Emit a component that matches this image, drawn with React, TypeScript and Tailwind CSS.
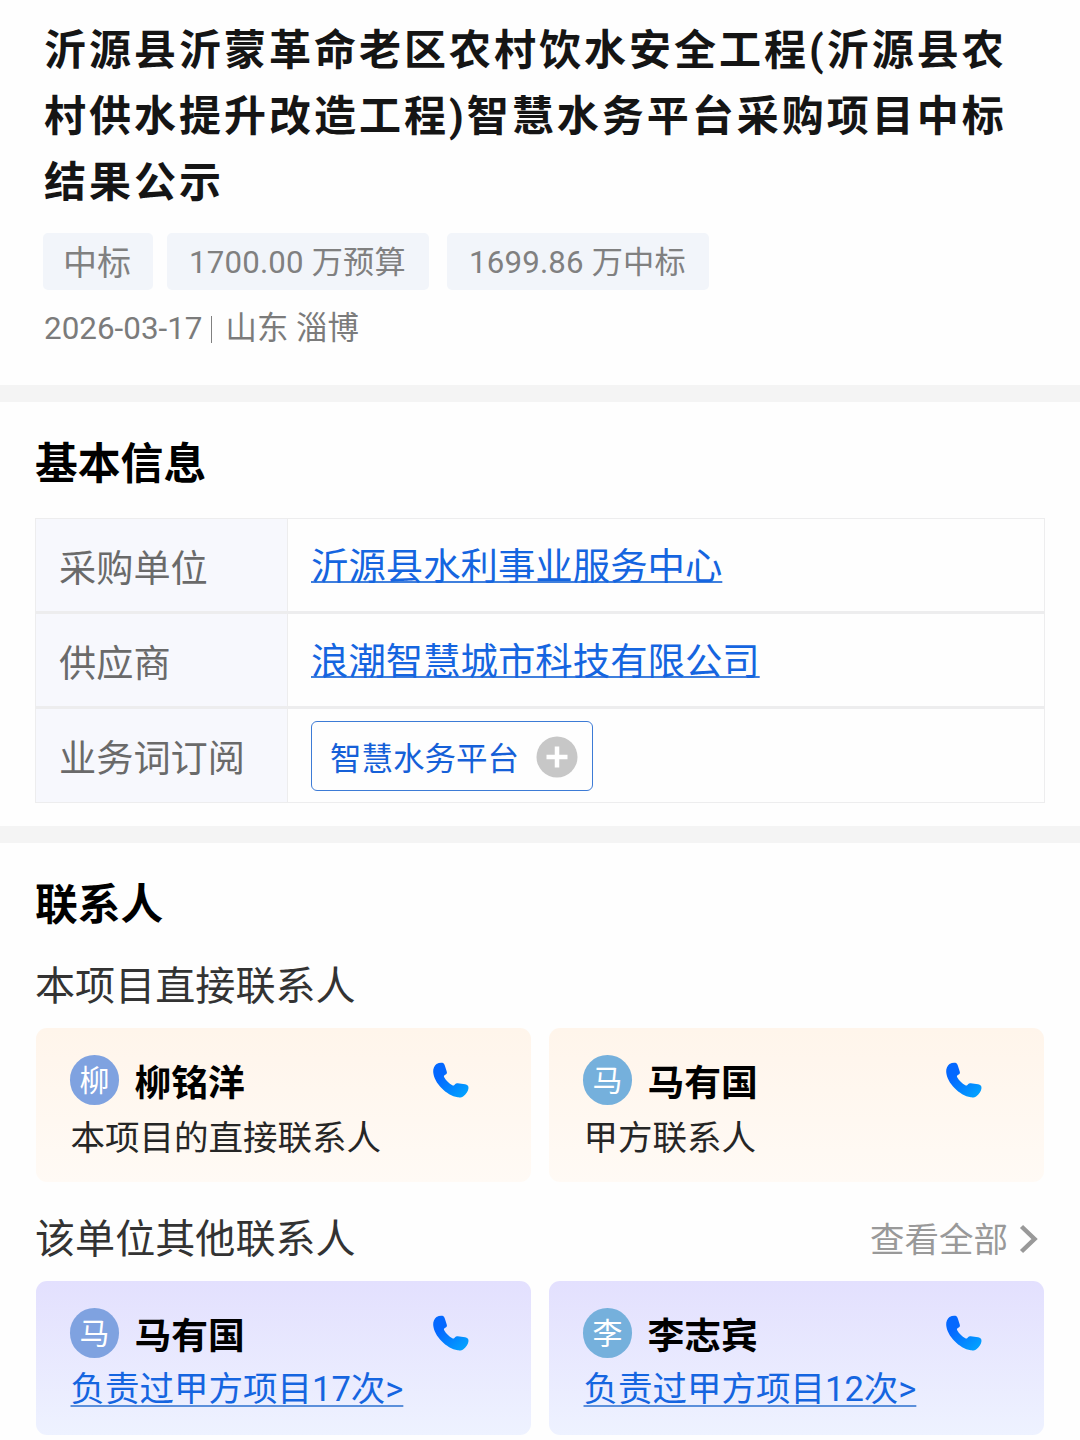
interface Contact {
  initial: string;
  name: string;
  note: string;
  avatar: string;
}

const tags = [
  { text: '中标', box: 'w-[110px] mr-[14px] pl-5 text-[34px]' },
  { text: '1700.00 万预算', box: 'w-[262px] mr-[18px] pl-[22px] text-[31.2px] tracking-[0.2px]' },
  { text: '1699.86 万中标', box: 'w-[262px] pl-[22px] text-[31.2px] tracking-[0.2px]' },
];

const directContacts: Contact[] = [
  { initial: '柳', name: '柳铭洋', note: '本项目的直接联系人', avatar: 'bg-[#7fa2e0]' },
  { initial: '马', name: '马有国', note: '甲方联系人', avatar: 'bg-[#75b0dc]' },
];

const otherContacts: Contact[] = [
  { initial: '马', name: '马有国', note: '负责过甲方项目17次>', avatar: 'bg-[#7fa2e0]' },
  { initial: '李', name: '李志宾', note: '负责过甲方项目12次>', avatar: 'bg-[#75b0dc]' },
];

const PhoneIcon = () => (
  <svg viewBox="0 0 36 36" className="mt-[7px] h-9 w-9">
    <defs>
      <linearGradient id="phone" x1="0" y1="0" x2="1" y2="1">
        <stop offset="0.3" stopColor="#0468ff" />
        <stop offset="0.9" stopColor="#03a0ff" />
      </linearGradient>
    </defs>
    <path
      fill="url(#phone)"
      d="M3.500 2C5.400.8 7.800.4 9.500.8c1.300.4 1.900 1.500 2.400 2.900l1.900 6c.3 1.100.1 1.900-.7 2.500l-1.600 1.100c-.7.5-.7 1.100-.3 1.900 1.900 3.300 4.800 6.200 8.100 8.100.8.5 1.500.4 2.100-.3l.9-1c.6-.7 1.400-.9 2.400-.7l7.400 1c2.300.4 3.500 1.600 3.400 3.700-.2 3-2.100 6-4.800 7.900-1.700 1.300-3.500 1.700-6 1.400C13.500 33.500.9 21 .2 10 0 6.800 1.300 3.600 3.500 2Z"
    />
  </svg>
);

const ContactCard = ({ contact, linked }: { contact: Contact; linked?: boolean }) => (
  <div
    className={`h-[154px] w-[495px] rounded-[11px] bg-linear-to-b pl-[34px] pt-[27px] ${
      linked ? 'from-[#e3e0fe] to-[#eef2ff]' : 'from-[#fff5eb] to-[#fffaf5]'
    }`}
  >
    <div className="flex h-[50px] pr-[62px]">
      <div
        className={`flex h-[50px] w-[49px] items-center justify-center rounded-full pt-px text-[30px] leading-none text-white ${contact.avatar}`}
      >
        {contact.initial}
      </div>
      <div className="ml-[15.5px] mt-1 flex-1 text-[36.8px] leading-[50px] font-bold text-black">
        {contact.name}
      </div>
      <PhoneIcon />
    </div>
    {linked ? (
      <a className="mt-[6px] block pl-[0.5px] text-[34.5px] leading-[50px] text-[#1565e0] underline decoration-[#5b8fdb] decoration-2 underline-offset-[4px] [text-decoration-skip-ink:none]">
        {contact.note}
      </a>
    ) : (
      <p className="mt-2 pl-[0.5px] text-[34.5px] leading-[50px] text-[#262626]">{contact.note}</p>
    )}
  </div>
);

const InfoRow = ({ label, children }: { label: string; children: React.ReactNode }) => (
  <div className="flex h-[95px] border-b-[3px] border-[#ededee] last:h-[93px] last:border-b-0">
    <div className="flex w-[252px] items-center border-r border-[#ededee] bg-[#f7f8fd] pl-[23px] pt-[9px] text-[37.2px] text-[#6a6a6a]">
      {label}
    </div>
    <div className="flex flex-1 items-center pl-[23px]">{children}</div>
  </div>
);

const InfoLink = ({ text }: { text: string }) => (
  <a className="mt-[3px] text-[37.4px] leading-[50px] text-[#1565e0] underline decoration-[#3f7fdd] decoration-2 underline-offset-[1px] [text-decoration-skip-ink:none]">
    {text}
  </a>
);

export default function App() {
  return (
    <div className="h-[1440px] w-[1080px] overflow-hidden bg-[#fefefe] font-['Roboto','Noto_Sans_CJK_SC',sans-serif]">
      <header className="h-[385px] pl-[43px] pt-[18px]">
        <h1 className="pl-px text-[42px] leading-[66px] font-bold tracking-[3px] text-[#151515]">
          沂源县沂蒙革命老区农村饮水安全工程(沂源县农
          <br />
          村供水提升改造工程)智慧水务平台采购项目中标
          <br />
          结果公示
        </h1>
        <div className="mt-[17px] flex">
          {tags.map((tag) => (
            <span
              key={tag.text}
              className={`h-[57px] whitespace-nowrap rounded-[5px] bg-[#f2f5fa] leading-[60px] text-[#808080] ${tag.box}`}
            >
              {tag.text}
            </span>
          ))}
        </div>
        <div className="mt-[15px] flex items-center pl-px text-[31.4px] leading-[48px] text-[#7b7b7b]">
          2026-03-17
          <span className="ml-[8px] mr-[14px] h-[27px] w-px bg-[#808080]" />
          山东 淄博
        </div>
      </header>

      <div className="h-[17px] bg-[#f4f4f4]" />

      <section className="h-[424px] px-[35px] pt-8">
        <h2 className="text-[42.8px] leading-[60px] font-bold text-black">基本信息</h2>
        <div className="mt-6 w-[1010px] border border-[#ededee]">
          <InfoRow label="采购单位">
            <InfoLink text="沂源县水利事业服务中心" />
          </InfoRow>
          <InfoRow label="供应商">
            <InfoLink text="浪潮智慧城市科技有限公司" />
          </InfoRow>
          <InfoRow label="业务词订阅">
            <button className="flex h-[70px] w-[282px] items-center rounded-[6px] border-[1.5px] border-[#3d7bd6] pl-[18px] text-[31.5px] text-[#1560d8]">
              <span className="mt-[9px]">智慧水务平台</span>
              <svg viewBox="0 0 42 42" className="ml-[17px] mt-[2px] h-[42px] w-[42px]">
                <circle cx="21" cy="21" r="20.500" fill="#c7c7c7" />
                <path d="M10.500 21h21M21 10.500v21" stroke="#fff" strokeWidth="4.500" />
              </svg>
            </button>
          </InfoRow>
        </div>
      </section>

      <div className="h-[17px] bg-[#f4f4f4]" />

      <section className="px-9 pt-8">
        <h2 className="-ml-px text-[42.8px] leading-[60px] font-bold text-black">联系人</h2>
        <h3 className="-ml-px mt-[22px] text-[40.1px] leading-[60px] text-[#333]">本项目直接联系人</h3>
        <div className="mt-[11px] flex gap-[18px]">
          {directContacts.map((contact) => (
            <ContactCard key={contact.name} contact={contact} />
          ))}
        </div>
        <div className="mt-[28px] flex justify-between">
          <h3 className="-ml-px text-[40.1px] leading-[60px] text-[#333]">该单位其他联系人</h3>
          <a className="flex items-center text-[34.5px] leading-[60px] text-[#999]">
            查看全部
            <svg viewBox="0 0 20 30" className="mb-[2px] ml-[11px] mr-[5px] h-[30px] w-5">
              <path d="M2.500 2.500 15.500 15 2.500 27.500" fill="none" stroke="#999" strokeWidth="4.500" />
            </svg>
          </a>
        </div>
        <div className="mt-[11px] flex gap-[18px]">
          {otherContacts.map((contact) => (
            <ContactCard key={contact.name} contact={contact} linked />
          ))}
        </div>
      </section>
    </div>
  );
}
